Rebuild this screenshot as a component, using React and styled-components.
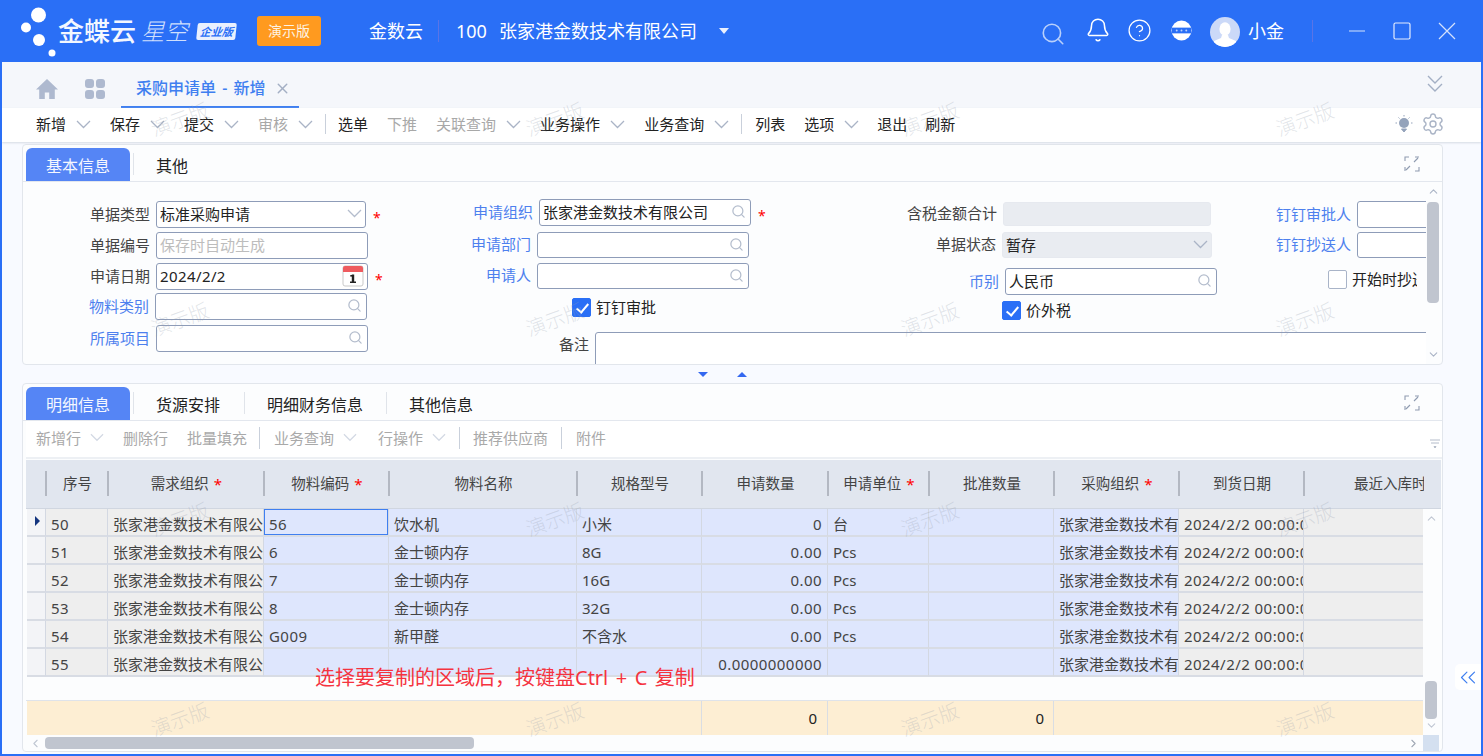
import styled, { createGlobalStyle } from 'styled-components'
import {
  Bell, ChevronDown, ChevronLeft, ChevronRight, ChevronUp, ChevronsLeft,
  CircleHelp, Search, Settings, X,
} from 'lucide-react'

const GlobalStyle = createGlobalStyle`
  html, body { margin: 0; padding: 0; overflow: hidden; }
  body { font-family: "Noto Sans", "Noto Sans CJK SC", sans-serif; font-size: 15px; color: #333; }
  * { box-sizing: border-box; }
`

const COLS = '20px 62px 156px 125px 188px 125px 126px 101px 125px 125px 125px 120px'

const mainTools = [
  { t: '新增', m: 1 }, { t: '保存', m: 1 }, { t: '提交', m: 1 }, { t: '审核', m: 1, off: 1 }, { sep: 1, l: -7, r: -7 },
  { t: '选单' }, { t: '下推', off: 1 }, { t: '关联查询', m: 1, off: 1 }, { t: '业务操作', m: 1 }, { t: '业务查询', m: 1 }, { sep: 1, l: -7, r: -6 },
  { t: '列表' }, { t: '选项', m: 1 }, { t: '退出', ml: -1 }, { t: '刷新', ml: -1 },
]

const detailTools = [
  { t: '新增行', m: 1 }, { t: '删除行' }, { t: '批量填充' }, { sep: 1, l: -7, r: -5 }, { t: '业务查询', m: 1 }, { t: '行操作', m: 1, ml: 2 },
  { sep: 1, l: -6, r: -6 }, { t: '推荐供应商' }, { sep: 1, l: -6, r: -5 }, { t: '附件' },
]

const headers = [
  { t: '序号' }, { t: '需求组织', req: 1 }, { t: '物料编码', req: 1 }, { t: '物料名称' }, { t: '规格型号' }, { t: '申请数量' },
  { t: '申请单位', req: 1 }, { t: '批准数量' }, { t: '采购组织', req: 1 }, { t: '到货日期' }, { t: '最近入库时间', left: 1 },
]

const rows = [
  ['50', '56', '饮水机', '小米', '0', '台'],
  ['51', '6', '金士顿内存', '8G', '0.00', 'Pcs'],
  ['52', '7', '金士顿内存', '16G', '0.00', 'Pcs'],
  ['53', '8', '金士顿内存', '32G', '0.00', 'Pcs'],
  ['54', 'G009', '新甲醛', '不含水', '0.00', 'Pcs'],
  ['55', '', '', '', '0.0000000000', ''],
]

export default function App() {
  return (
    <Win>
      <GlobalStyle />
      <TopBar>
        <LogoMark viewBox="2 0 56 62">
          <circle cx="38.5" cy="15" r="7.5" fill="#fff" />
          <circle cx="26" cy="27.5" r="5" fill="#fff" />
          <circle cx="39" cy="40" r="6" fill="#fff" />
          <circle cx="52" cy="53" r="3.5" fill="#fff" />
        </LogoMark>
        <BrandName>金蝶云</BrandName>
        <BrandSub>星空</BrandSub>
        <BrandBadge>企业版</BrandBadge>
        <DemoBtn>演示版</DemoBtn>
        <TopText $ml={48}>金数云</TopText>
        <TopSep $ml={15} $mr={17} />
        <TopText>100</TopText>
        <TopText $ml={12}>张家港金数技术有限公司</TopText>
        <Caret />
        <TopRight>
          <Search size={26} color="#b9d0fb" strokeWidth={1.5} style={{ marginTop: 5 }} />
          <Bell size={26} color="#fff" strokeWidth={1.4} style={{ marginLeft: 19, marginTop: -2 }} />
          <CircleHelp size={25} color="#fff" strokeWidth={1.2} style={{ marginLeft: 16, marginTop: -1 }} />
          <DotsIcon viewBox="0 0 22 22">
            <circle cx="11" cy="11" r="10.5" fill="#fff" />
            <rect x="1" y="8" width="20" height="6" fill="#2a6ff6" />
            <circle cx="6" cy="11" r="1" fill="#bcd2fb" />
            <circle cx="11" cy="11" r="1" fill="#bcd2fb" />
            <circle cx="16" cy="11" r="1" fill="#bcd2fb" />
          </DotsIcon>
          <Avatar viewBox="0 0 30 30">
            <defs>
              <clipPath id="av"><circle cx="15" cy="15" r="15" /></clipPath>
            </defs>
            <circle cx="15" cy="15" r="15" fill="#cbd9f8" />
            <g clipPath="url(#av)" fill="#fff">
              <ellipse cx="15" cy="12" rx="5.6" ry="6.8" />
              <path d="M12 18h6l1 3 7 3v6H4v-6l7-3z" />
            </g>
          </Avatar>
          <UserName>小金</UserName>
          <TopSep $ml={28} $mr={35} />
          <WinIcon viewBox="0 0 18 18" stroke="#b9d0fb">
            <path d="M1 9h16" />
          </WinIcon>
          <WinIcon viewBox="0 0 18 18" stroke="#e4ecfd">
            <rect x="1" y="1" width="16" height="16" rx="1.500" />
          </WinIcon>
          <WinIcon viewBox="0 0 18 18" stroke="#d5e2fc">
            <path d="M1 1l16 16M17 1 1 17" />
          </WinIcon>
        </TopRight>
      </TopBar>

      <TabStrip>
        <HomeIcon viewBox="0 0 24 24">
          <path d="M12 2 1 12.5h3.2V22h5.600v-6.500h4.400V22h5.600v-9.500H23z" fill="#aeb9cf" />
        </HomeIcon>
        <AppsIcon viewBox="0 0 22 22">
          <rect x="1" y="1" width="9" height="9" rx="3" fill="#aeb9cf" />
          <rect x="12" y="1" width="9" height="9" rx="3" fill="#aeb9cf" />
          <rect x="1" y="12" width="9" height="9" rx="3" fill="#aeb9cf" />
          <rect x="12" y="12" width="9" height="9" rx="3" fill="#aeb9cf" />
        </AppsIcon>
        <PageTab>
          采购申请单 - 新增
          <X size={17} color="#a3afc4" strokeWidth={2} />
        </PageTab>
        <CollapseIcon viewBox="0 0 16 18">
          <path d="M1 1l7 7 7-7M1 9l7 7 7-7" />
        </CollapseIcon>
      </TabStrip>

      <MainToolbar>
        {mainTools.map((x, i) => (x.sep
          ? <ToolSep key={i} $h={20} $l={x.l} $r={x.r} />
          : (
            <ToolItem key={i} $off={x.off} $ml={x.ml}>
              {x.t}
              {x.m && <Chev color="#aab4c6" />}
            </ToolItem>
          )))}
        <ToolRight>
          <svg width="18" height="18" viewBox="0 0 18 18">
            <circle cx="9" cy="8" r="5" fill="#94a3bb" />
            <path d="M6.500 14h5L9 17zM9 0v1.500M2 8H.5M17.500 8H16M3.500 2.500l1 1M14.500 2.500l-1 1" stroke="#94a3bb" strokeWidth="1" fill="#94a3bb" />
          </svg>
          <Settings size={24} color="#aab4c6" strokeWidth={1.4} />
        </ToolRight>
      </MainToolbar>

      <Content>
        <Panel $h={221}>
          <PanelTabs>
            <PanelTab $active>基本信息</PanelTab>
            <PanelTab $ml={3}>其他</PanelTab>
            <ExpandIcon />
          </PanelTabs>
          <FormWrap>
            <FormClip>
              <FormCol $w={365}>
                <Field $top={19}>
                  <Label $w={127}>单据类型</Label>
                  <Input $w={210}>标准采购申请<Chev color="#b4bdcd" /></Input>
                  <Star />
                </Field>
                <Field $top={4}>
                  <Label $w={127}>单据编号</Label>
                  <Input $w={212} $hint>保存时自动生成</Input>
                </Field>
                <Field $top={4}>
                  <Label $w={127}>申请日期</Label>
                  <Input $w={212} $wide>2024/2/2<CalendarIcon /></Input>
                  <Star />
                </Field>
                <Field $top={3}>
                  <Label $w={126} $link>物料类别</Label>
                  <Input $w={212}><LookupIcon /></Input>
                </Field>
                <Field $top={5}>
                  <Label $w={127} $link>所属项目</Label>
                  <Input $w={212}><LookupIcon /></Input>
                </Field>
              </FormCol>
              <FormRight>
                <FormRow>
                  <FormCol $w={480}>
                    <Field $top={17}>
                      <Label $w={132} $link>申请组织</Label>
                      <Input $w={212}>张家港金数技术有限公司<LookupIcon /></Input>
                      <Star />
                    </Field>
                    <Field $top={6}>
                      <Label $w={130} $link>申请部门</Label>
                      <Input $w={212} $h={26}><LookupIcon /></Input>
                    </Field>
                    <Field $top={5}>
                      <Label $w={130} $link>申请人</Label>
                      <Input $w={212} $h={26}><LookupIcon /></Input>
                    </Field>
                    <CheckRow $left={171} $top={8}>
                      <CheckBox $on />钉钉审批
                    </CheckRow>
                  </FormCol>
                  <FormCol $w={340}>
                    <Field $top={20} $shift={1}>
                      <Label $w={115}>含税金额合计</Label>
                      <Input $w={208} $h={24} $gray />
                    </Field>
                    <Field $top={6}>
                      <Label $w={115}>单据状态</Label>
                      <Input $w={210} $h={26} $gray>暂存<Chev color="#aab4c6" /></Input>
                    </Field>
                    <Field $top={10} $shift={3}>
                      <Label $w={115} $link>币别</Label>
                      <Input $w={212}>人民币<LookupIcon /></Input>
                    </Field>
                    <CheckRow $left={121} $top={5}>
                      <CheckBox $on />价外税
                    </CheckRow>
                  </FormCol>
                  <FormCol $w={205}>
                    <Field $top={19}>
                      <Label $w={130} $link>钉钉审批人</Label>
                      <Input $w={90} />
                    </Field>
                    <Field $top={4}>
                      <Label $w={130} $link>钉钉抄送人</Label>
                      <Input $w={90} $h={26} />
                    </Field>
                    <CheckRow $left={107} $top={11} $maxW={89}>
                      <CheckBox />开始时抄送
                    </CheckRow>
                  </FormCol>
                </FormRow>
                <NoteRow>
                  <Label $w={30}>备注</Label>
                  <NoteBox />
                </NoteRow>
              </FormRight>
            </FormClip>
            <VBar>
              <ChevronUp size={13} color="#aab4c6" />
              <VThumb $top={4} $h={101} />
              <VGrow />
              <ChevronDown size={13} color="#aab4c6" />
            </VBar>
          </FormWrap>
        </Panel>

        <Splitter>
          <Tri />
          <Tri $up />
        </Splitter>

        <Panel $h={369}>
          <PanelTabs>
            <PanelTab $active>明细信息</PanelTab>
            <PanelTab $ml={3}>货源安排</PanelTab>
            <PanelTab $ml={1}>明细财务信息</PanelTab>
            <PanelTab>其他信息</PanelTab>
            <ExpandIcon />
          </PanelTabs>
          <DetailToolbar>
            {detailTools.map((x, i) => (x.sep
              ? <ToolSep key={i} $h={22} $l={x.l} $r={x.r} />
              : (
                <ToolItem key={i} $off $small $ml={x.ml}>
                  {x.t}
                  {x.m && <Chev color="#d3d9e4" $w={14} />}
                </ToolItem>
              )))}
            <MiniSort viewBox="0 0 10 12">
              <path d="M0 3h10M1 6h8M4 9.500h2l-1 1.500z" stroke="#b4bcca" strokeWidth="1" fill="#b4bcca" />
            </MiniSort>
          </DetailToolbar>
          <GridHead>
            <span />
            {headers.map((h, i) => (
              <HeadCell key={i} $left={h.left}>
                <HeadText>{h.t}</HeadText>
                {h.req && <ReqMark>*</ReqMark>}
              </HeadCell>
            ))}
          </GridHead>
          <GridBody>
            <GridMain>
              <RowsArea>
                {rows.map((r, i) => (
                  <Row key={i}>
                    <Cell $tone="head">{i === 0 && <RowPointer />}</Cell>
                    <Cell $tone="gray" $wide>{r[0]}</Cell>
                    <Cell $tone="gray">张家港金数技术有限公司</Cell>
                    <Cell $tone="blue" $sel={i === 0} $wide>{r[1]}</Cell>
                    <Cell $tone="blue">{r[2]}</Cell>
                    <Cell $tone="blue">{r[3]}</Cell>
                    <Cell $tone="blue" $num $wide>{r[4]}</Cell>
                    <Cell $tone="blue">{r[5]}</Cell>
                    <Cell $tone="blue" />
                    <Cell $tone="blue">张家港金数技术有限公司</Cell>
                    <Cell $tone="gray" $wide>2024/2/2 00:00:00</Cell>
                    <Cell $tone="gray" />
                  </Row>
                ))}
                <Hint>选择要复制的区域后，按键盘Ctrl + C 复制</Hint>
              </RowsArea>
              <SumRow>
                <SumCell $span={6} />
                <SumCell $span={1} $pad={10}>0</SumCell>
                <SumCell $span={2} $pad={9}>0</SumCell>
                <SumCell $span={3} />
              </SumRow>
            </GridMain>
            <TableVBar>
              <ChevronUp size={13} color="#c0c7d3" />
              <VGrow />
              <VThumb $top={0} $h={38} />
              <ChevronDown size={13} color="#c0c7d3" />
            </TableVBar>
          </GridBody>
          <HBarRow>
            <HBar>
              <ChevronLeft size={13} color="#c0c7d3" />
              <HThumb />
              <ChevronRight size={13} color="#a0a8b5" style={{ marginLeft: 'auto' }} />
            </HBar>
            <Corner />
          </HBarRow>
        </Panel>
      </Content>

      <SideHandle>
        <ChevronsLeft size={27} color="#3f7ff0" strokeWidth={1.1} />
      </SideHandle>

      <Watermarks>
        {Array.from({ length: 16 }).map((_, i) => <Mark key={i}>演示版</Mark>)}
      </Watermarks>
    </Win>
  )
}

function Chev({ color, $w }) {
  return (
    <ChevSvg viewBox="0 0 15 9" stroke={color} $w={$w}>
      <path d="M1 1l6.500 6.500L14 1" />
    </ChevSvg>
  )
}

function LookupIcon() {
  return <Search size={15} color="#b4bdcd" strokeWidth={2} style={{ marginLeft: 'auto', marginRight: 1 }} />
}

function CalendarIcon() {
  return (
    <CalSvg viewBox="0 0 22 22">
      <rect x="1" y="1" width="20" height="20" rx="2" fill="#fff" stroke="#c9c9c9" />
      <path d="M1 3a2 2 0 0 1 2-2h16a2 2 0 0 1 2 2v4H1z" fill="#ee5b5f" />
      <rect x="9.800" y="9.500" width="2.400" height="8.500" fill="#222" />
      <rect x="8" y="16.500" width="6" height="1.500" fill="#222" />
      <rect x="8.300" y="10" width="2" height="1.600" fill="#222" />
    </CalSvg>
  )
}

function ExpandIcon() {
  return (
    <ExpandSvg viewBox="0 0 16 16" fill="none" stroke="#8f9bb0" strokeWidth="1.100">
      <path d="M1 5V1h4M15 11v4h-4M10 6l4-4M11 1h4v0M6 10l-4 4M1 11v4" />
    </ExpandSvg>
  )
}

const Win = styled.div`
  position: relative;
  width: 1483px;
  height: 756px;
  border: solid #2a6ff6;
  border-width: 0 2px 2px 2px;
  background: #f8faff;
  overflow: hidden;
  display: flex;
  flex-direction: column;
`

const TopBar = styled.header`
  height: 62px;
  flex: none;
  margin: 0 -2px;
  padding-left: 2px;
  background: #2a6ff6;
  color: #fff;
  display: flex;
  align-items: center;
`
const LogoMark = styled.svg`
  width: 56px;
  height: 62px;
  flex: none;
`
const BrandName = styled.div`
  font-size: 26px;
  line-height: 30px;
  font-weight: 500;
  color: #f3f7ff;
`
const BrandSub = styled.div`
  margin-left: 5px;
  font-size: 23.5px;
  line-height: 30px;
  font-weight: 300;
  font-style: italic;
  color: #cfdffd;
`
const BrandBadge = styled.div`
  margin-left: 9px;
  width: 39px;
  height: 17px;
  background: #e9f0fe;
  border-radius: 2px;
  color: #2a6ff6;
  font-size: 11px;
  line-height: 17px;
  font-weight: 700;
  font-style: italic;
  text-align: center;
  transform: skewX(-6deg);
`
const DemoBtn = styled.div`
  margin-left: 21px;
  width: 64px;
  height: 30px;
  background: #ff9a1f;
  border-radius: 3px;
  font-size: 14px;
  line-height: 30px;
  text-align: center;
  color: #fdf3e2;
`
const TopText = styled.div`
  margin-left: ${({ $ml }) => $ml || 0}px;
  font-size: 18px;
  line-height: 26px;
  white-space: nowrap;
`
const TopSep = styled.div`
  width: 1px;
  height: 22px;
  flex: none;
  background: #5a74e6;
  margin: 0 ${({ $mr }) => $mr || 0}px 0 ${({ $ml }) => $ml || 0}px;
`
const Caret = styled.div`
  margin-left: 22px;
  border: 5.500px solid transparent;
  border-top: 6px solid #eaf0fe;
  border-bottom: 0;
`
const TopRight = styled.div`
  margin-left: auto;
  padding-right: 27px;
  display: flex;
  align-items: center;
`
const DotsIcon = styled.svg`
  width: 21px;
  height: 21px;
  margin: -1px 0 0 19px;
`
const Avatar = styled.svg`
  width: 30px;
  height: 30px;
  margin: 2px 0 0 18px;
`
const UserName = styled.div`
  margin-left: 8px;
  font-size: 18px;
  line-height: 26px;
`
const WinIcon = styled.svg`
  width: 18px;
  height: 18px;
  flex: none;
  fill: none;
  stroke-width: 1.200;
  & + & { margin-left: 27px; }
`

const TabStrip = styled.div`
  height: 46px;
  flex: none;
  background: #f5f7fb;
  display: flex;
  align-items: flex-end;
`
const HomeIcon = styled.svg`
  width: 24px;
  height: 24px;
  margin: 0 0 7px 33px;
`
const AppsIcon = styled.svg`
  width: 22px;
  height: 22px;
  margin: 0 0 8px 25px;
`
const PageTab = styled.div`
  margin-left: 15px;
  width: 178px;
  height: 35px;
  padding: 0 0 3px 15px;
  border-bottom: 2px solid #3f7ff0;
  color: #3f7ff0;
  font-size: 16px;
  font-weight: 500;
  line-height: 30px;
  word-spacing: 2px;
  display: flex;
  align-items: center;
  gap: 9px;
  white-space: nowrap;
`
const CollapseIcon = styled.svg`
  width: 16px;
  height: 18px;
  align-self: flex-start;
  margin: 13px 38px 0 auto;
  fill: none;
  stroke: #a3afc4;
  stroke-width: 1.400;
`

const MainToolbar = styled.div`
  height: 34px;
  flex: none;
  background: #fff;
  padding: 0 0 2px 34px;
  display: flex;
  align-items: center;
  gap: 19px;
  box-shadow: 0 1px 2px #d5dae3;
  position: relative;
`
const ToolItem = styled.div`
  margin-left: ${({ $ml }) => $ml || 0}px;
  display: flex;
  align-items: center;
  gap: ${({ $small }) => ($small ? 9 : 10)}px;
  font-size: 15px;
  line-height: 20px;
  white-space: nowrap;
  color: ${({ $off, $small }) => ($small ? '#a9a9a9' : $off ? '#a8a8a8' : '#222')};
`
const ChevSvg = styled.svg`
  width: ${({ $w }) => $w || 15}px;
  height: 9px;
  flex: none;
  fill: none;
  stroke-width: 1.300;
`
const ToolSep = styled.div`
  width: 1px;
  height: ${({ $h }) => $h}px;
  flex: none;
  background: #c9d0db;
  margin: 0 ${({ $r }) => $r}px 0 ${({ $l }) => $l}px;
`
const ToolRight = styled.div`
  margin-left: auto;
  padding-right: 36px;
  display: flex;
  align-items: center;
  gap: 8px;
`

const Content = styled.main`
  flex: 1;
  min-height: 0;
  padding: 2px 0 0 20px;
`
const Panel = styled.section`
  width: 1421px;
  height: ${({ $h }) => $h}px;
  background: #fcfdfe;
  border: 1px solid #e2e6ec;
  border-radius: 4px;
  display: flex;
  flex-direction: column;
  overflow: hidden;
`
const PanelTabs = styled.div`
  height: 37px;
  flex: none;
  padding: 2px 0 0 3px;
  display: flex;
  align-items: center;
  border-bottom: 1px solid #e3e7ee;
`
const PanelTab = styled.div`
  height: ${({ $active }) => ($active ? '33px' : '22px')};
  align-self: ${({ $active }) => ($active ? 'flex-end' : 'center')};
  padding: 0 ${({ $active }) => ($active ? 20 : 23)}px 0 ${({ $active }) => ($active ? 20 : 22)}px;
  margin-left: ${({ $ml }) => $ml || 0}px;
  background: ${({ $active }) => ($active ? '#5585f5' : 'transparent')};
  color: ${({ $active }) => ($active ? '#f4f7ff' : '#222')};
  border-radius: ${({ $active }) => ($active ? '6px 6px 0 0' : '0')};
  border-left: ${({ $active }) => ($active ? 'none' : '1px solid #e0e4ea')};
  font-size: 16px;
  line-height: ${({ $active }) => ($active ? '37px' : '26px')};
  white-space: nowrap;
`
const ExpandSvg = styled.svg`
  width: 16px;
  height: 16px;
  margin: 0 22px 0 auto;
`

const FormWrap = styled.div`
  flex: 1;
  min-height: 0;
  display: flex;
`
const FormClip = styled.div`
  width: 1403px;
  flex: none;
  display: flex;
  overflow: hidden;
`
const FormCol = styled.div`
  width: ${({ $w }) => $w}px;
  flex: none;
  display: flex;
  flex-direction: column;
`
const FormRight = styled.div`
  flex: none;
  width: 1025px;
  margin-left: 13px;
  display: flex;
  flex-direction: column;
`
const FormRow = styled.div`
  display: flex;
  height: 150px;
  flex: none;
`
const Field = styled.div`
  margin-top: ${({ $top }) => $top}px;
  margin-left: ${({ $shift }) => $shift || 0}px;
  display: flex;
  align-items: center;
`
const Label = styled.label`
  width: ${({ $w }) => $w}px;
  flex: none;
  margin-right: 6px;
  padding-bottom: 2px;
  text-align: right;
  white-space: nowrap;
  font-size: 15px;
  line-height: 20px;
  color: ${({ $link }) => ($link ? '#4d80ee' : '#444')};
`
const Input = styled.div`
  width: ${({ $w }) => $w}px;
  height: ${({ $h }) => $h || 27}px;
  flex: none;
  padding: 0 3px 2px 3px;
  border: 1px solid ${({ $gray }) => ($gray ? '#e6e9ef' : '#8e9cb8')};
  border-radius: 3px;
  background: ${({ $gray }) => ($gray ? '#e9ecf1' : '#fff')};
  color: ${({ $hint }) => ($hint ? '#bdbdbd' : '#222')};
  font-size: 15px;
  letter-spacing: ${({ $wide }) => ($wide ? '0.4px' : '0')};
  display: flex;
  align-items: center;
  justify-content: space-between;
  white-space: nowrap;
  overflow: hidden;
`
const CalSvg = styled.svg`
  width: 22px;
  height: 22px;
`
const Star = styled.span`
  margin: 7px 0 0 7px;
  color: #f00;
  font-size: 14px;
  line-height: 14px;
  &::before { content: '*'; }
`
const CheckRow = styled.div`
  margin: ${({ $top }) => $top}px 0 0 ${({ $left }) => $left}px;
  ${({ $maxW }) => ($maxW ? `width: ${$maxW}px; overflow: hidden;` : '')}
  display: flex;
  align-items: center;
  gap: 5px;
  font-size: 15px;
  line-height: 20px;
  color: #222;
  white-space: nowrap;
`
const CheckBox = styled.span`
  width: 19px;
  height: 19px;
  flex: none;
  border-radius: 2px;
  border: 1px solid ${({ $on }) => ($on ? '#2a6ff6' : '#a9b4c8')};
  background: ${({ $on }) => ($on ? '#2a6ff6' : '#fff')};
  position: relative;
  &::after {
    content: '';
    display: ${({ $on }) => ($on ? 'block' : 'none')};
    position: absolute;
    left: 6px;
    top: 2px;
    width: 5px;
    height: 10px;
    border: solid #fff;
    border-width: 0 2px 2px 0;
    transform: rotate(40deg);
  }
`
const NoteRow = styled.div`
  margin-left: 158px;
  display: flex;
  align-items: flex-start;
  & > label { margin-top: 2px; }
`
const NoteBox = styled.div`
  width: 850px;
  height: 60px;
  flex: none;
  background: #fff;
  border: 1px solid #8e9cb8;
  border-radius: 3px 0 0 0;
`
const VBar = styled.div`
  width: 14px;
  flex: none;
  padding: 3px 0;
  display: flex;
  flex-direction: column;
  align-items: center;
`
const VThumb = styled.div`
  width: 12px;
  height: ${({ $h }) => $h}px;
  flex: none;
  margin: ${({ $top }) => $top}px 0;
  border-radius: 4px;
  background: #c0c5cf;
`
const VGrow = styled.div`
  flex: 1;
`

const Splitter = styled.div`
  width: 1421px;
  height: 18px;
  display: flex;
  justify-content: center;
  align-items: center;
  gap: 29px;
  padding-right: 20px;
`
const Tri = styled.span`
  width: 0;
  height: 0;
  border: 5.500px solid transparent;
  ${({ $up }) => ($up
    ? 'border-bottom: 5px solid #3468f0; border-top: 0;'
    : 'border-top: 5px solid #3468f0; border-bottom: 0;')}
`

const DetailToolbar = styled.div`
  height: 38px;
  flex: none;
  margin-left: 3px;
  padding: 0 0 3px 10px;
  background: #fff;
  border-bottom: 2px solid #edf0f4;
  display: flex;
  align-items: center;
  gap: 19px;
`
const MiniSort = styled.svg`
  width: 10px;
  height: 12px;
  margin: 11px 2px 0 auto;
`
const GridHead = styled.div`
  height: 49px;
  flex: none;
  margin: 1px 1px 0 3px;
  padding-bottom: 1px;
  background: #e1e6ef;
  border-bottom: 1px solid #d0d6e0;
  display: grid;
  grid-template-columns: ${COLS};
  align-items: center;
`
const HeadCell = styled.div`
  height: 25px;
  margin-left: -1px;
  padding-left: ${({ $left }) => ($left ? 49 : 0)}px;
  border-left: 2px solid #b3b8c2;
  display: flex;
  align-items: center;
  justify-content: ${({ $left }) => ($left ? 'flex-start' : 'center')};
  gap: 5px;
  overflow: hidden;
  white-space: nowrap;
  font-size: 14.500px;
  color: #444;
`
const HeadText = styled.span`
  line-height: 20px;
  margin-top: -1px;
`
const ReqMark = styled.span`
  color: #f00;
  font-size: 15px;
  line-height: 15px;
  margin-top: 1px;
`
const GridBody = styled.div`
  flex: 1;
  min-height: 0;
  margin-left: 3px;
  display: flex;
`
const GridMain = styled.div`
  width: 1397px;
  flex: none;
  display: flex;
  flex-direction: column;
`
const RowsArea = styled.div`
  flex: 1;
  min-height: 0;
  position: relative;
  border-bottom: 1px solid #dfe3ea;
  overflow: hidden;
`
const Row = styled.div`
  height: 28px;
  margin-left: 1px;
  display: grid;
  grid-template-columns: ${COLS.replace('20px', '19px')};
`
const toneColors = { head: '#f3f4f7', gray: '#eeeeee', blue: '#dee6fd' }
const Cell = styled.div`
  position: relative;
  padding: ${({ $num }) => ($num ? '0 5px 0 0' : '0 0 0 5px')};
  background: ${({ $tone }) => toneColors[$tone]};
  border-right: 1px solid #d3d8e2;
  border-bottom: 2px solid #d8dce4;
  box-shadow: ${({ $sel }) => ($sel ? 'inset 0 0 0 1px #3f7ff0' : 'none')};
  font-size: 15px;
  letter-spacing: ${({ $wide }) => ($wide ? '0.45px' : '0')};
  line-height: 30px;
  color: #444;
  text-align: ${({ $num }) => ($num ? 'right' : 'left')};
  white-space: nowrap;
  overflow: hidden;
`
const RowPointer = styled.span`
  position: absolute;
  left: 8px;
  top: 7px;
  border: 5px solid transparent;
  border-left: 5px solid #14357f;
  border-right: 0;
`
const Hint = styled.div`
  position: absolute;
  left: 289px;
  top: 155px;
  color: #f5333f;
  font-size: 20px;
  line-height: 28px;
  word-spacing: 2.300px;
  white-space: nowrap;
`
const SumRow = styled.div`
  height: 34px;
  flex: none;
  margin-left: 1px;
  background: #fdeed3;
  display: grid;
  grid-template-columns: ${COLS.replace('20px', '19px')};
`
const SumCell = styled.div`
  grid-column: span ${({ $span }) => $span};
  border-right: 1px solid #d9dde3;
  padding-right: ${({ $pad }) => $pad || 0}px;
  text-align: right;
  font-size: 15px;
  line-height: 34px;
  color: #222;
  &:last-child { border-right: none; }
`
const TableVBar = styled.div`
  width: 16px;
  flex: none;
  padding: 3px 0;
  display: flex;
  flex-direction: column;
  align-items: center;
`
const HBarRow = styled.div`
  height: 16px;
  flex: none;
  margin-left: 3px;
  display: flex;
`
const HBar = styled.div`
  width: 1397px;
  flex: none;
  padding: 0 3px;
  display: flex;
  align-items: center;
`
const HThumb = styled.div`
  width: 429px;
  height: 12px;
  margin-left: 3px;
  border-radius: 4px;
  background: #c0c5cf;
`
const Corner = styled.div`
  width: 16px;
  flex: none;
  background: #d4e0f0;
`

const SideHandle = styled.div`
  position: absolute;
  left: 1453px;
  top: 664px;
  width: 26px;
  height: 26px;
  border-radius: 5px 0 0 5px;
  background: #fff;
  display: flex;
  align-items: center;
  justify-content: center;
`
const Watermarks = styled.div`
  position: absolute;
  left: -10px;
  top: 20px;
  display: grid;
  grid-template-columns: repeat(4, 375px);
  grid-auto-rows: 200px;
  pointer-events: none;
`
const Mark = styled.div`
  place-self: center;
  transform: rotate(-20deg);
  font-size: 20px;
  font-weight: 300;
  color: rgba(150, 160, 175, 0.28);
  line-height: 24px;
`
